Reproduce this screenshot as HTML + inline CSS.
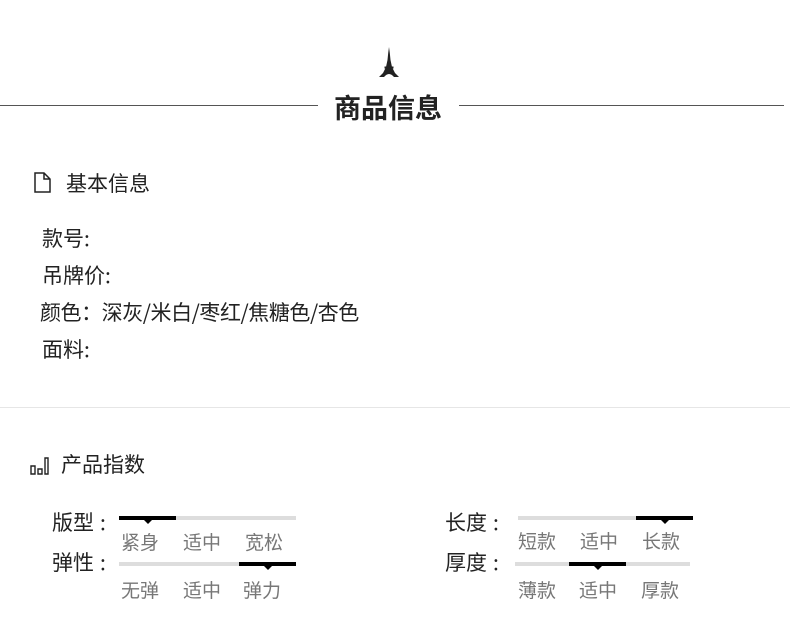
<!DOCTYPE html>
<html><head><meta charset="utf-8"><style>
body{margin:0;width:790px;height:626px;background:#fff;position:relative;overflow:hidden;font-family:"Noto Sans CJK SC",sans-serif;color:#222}
.a{position:absolute;white-space:nowrap;line-height:1}
.bar{position:absolute;height:4px;background:#ddd}
.blk{position:absolute;height:4px;top:0;background:#000}
.blk:after{content:"";position:absolute;left:50%;margin-left:-4px;top:4px;border-left:4px solid transparent;border-right:4px solid transparent;border-top:4px solid #000}
.lb{font-size:21px;color:#222}
.lb i{font-style:normal;margin-left:6px}
.g{font-size:19px;color:#777}
</style></head><body>
<div class="a" style="left:0;top:105px;width:318px;height:1px;background:#555"></div>
<div class="a" style="left:459px;top:105px;width:325px;height:1px;background:#555"></div>
<svg class="a" style="left:378px;top:47px" width="22" height="31" viewBox="0 0 22 31"><path d="M11 0 L11.8 6 L12.5 13 L14 20 L17 26 L21 30 L16 30 Q11 24 6 30 L1 30 L5 26 L8 20 L9.5 13 L10.2 6 Z M6.5 19.5 L15.5 19.5 L15.5 21.5 L6.5 21.5 Z" fill="#222"/></svg>
<div class="a" style="left:334px;top:93px;font-size:27px;font-weight:bold;color:#222">商品信息</div>

<svg class="a" style="left:34px;top:172px" width="17" height="21" viewBox="0 0 17 21"><path d="M1 1 H10 L16 7 V20 H1 Z M10 1 V7 H16" fill="none" stroke="#222" stroke-width="1.5"/></svg>
<div class="a" style="left:66px;top:173px;font-size:21px">基本信息</div>
<div class="a" style="left:42px;top:228px;font-size:21px">款号:</div>
<div class="a" style="left:42px;top:265px;font-size:21px">吊牌价:</div>
<div class="a" style="left:40px;top:302px;font-size:21px;letter-spacing:-0.45px">颜色：深灰/米白/枣红/焦糖色/杏色</div>
<div class="a" style="left:42px;top:339px;font-size:21px">面料:</div>
<div class="a" style="left:0;top:407px;width:790px;height:1px;background:#e6e6e6"></div>

<svg class="a" style="left:30px;top:457px" width="19" height="18" viewBox="0 0 19 18"><path d="M1 9 H5 V17 H1 Z M8 12 H12 V17 H8 Z M15 1 H18 V17 H15 Z" fill="none" stroke="#222" stroke-width="1.4"/></svg>
<div class="a" style="left:61px;top:454px;font-size:21px">产品指数</div>

<div class="a lb" style="left:52px;top:512px">版型<i>:</i></div>
<div class="bar" style="left:119px;top:516px;width:177px"><div class="blk" style="left:0;width:57px"></div></div>
<div class="a g" style="left:121px;top:532px">紧身</div><div class="a g" style="left:183px;top:532px">适中</div><div class="a g" style="left:245px;top:532px">宽松</div>

<div class="a lb" style="left:52px;top:552px">弹性<i>:</i></div>
<div class="bar" style="left:119px;top:562px;width:177px"><div class="blk" style="left:120px;width:57px"></div></div>
<div class="a g" style="left:121px;top:580px">无弹</div><div class="a g" style="left:183px;top:580px">适中</div><div class="a g" style="left:243px;top:580px">弹力</div>

<div class="a lb" style="left:445px;top:512px">长度<i>:</i></div>
<div class="bar" style="left:518px;top:516px;width:175px"><div class="blk" style="left:118px;width:57px"></div></div>
<div class="a g" style="left:518px;top:531px">短款</div><div class="a g" style="left:580px;top:531px">适中</div><div class="a g" style="left:642px;top:531px">长款</div>

<div class="a lb" style="left:445px;top:552px">厚度<i>:</i></div>
<div class="bar" style="left:515px;top:562px;width:175px"><div class="blk" style="left:54px;width:57px"></div></div>
<div class="a g" style="left:518px;top:580px">薄款</div><div class="a g" style="left:579px;top:580px">适中</div><div class="a g" style="left:641px;top:580px">厚款</div>
</body></html>
